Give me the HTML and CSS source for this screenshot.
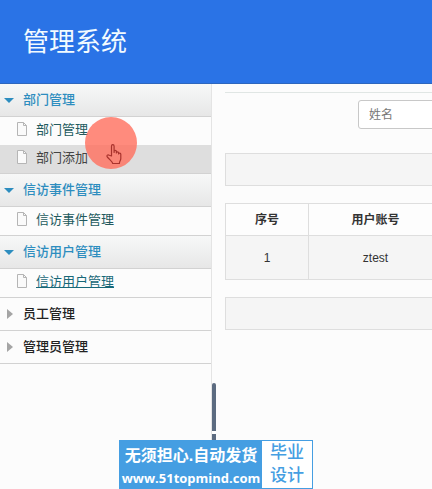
FILE: index.html
```html
<!DOCTYPE html>
<html lang="zh-CN">
<head>
    <meta charset="UTF-8">
    <title>管理系统</title>
    <link rel="stylesheet" href="styles.css">
</head>
<body>
<svg class="symbols" width="0" height="0">
    <symbol id="page" viewBox="0 0 12 14">
        <path d="M1.5 .5h6l3 3v10h-9z" fill="#fafafa" stroke="#b5b5b5"/>
        <path d="M7.5 .5v3h3" fill="none" stroke="#b5b5b5"/>
    </symbol>
</svg>
<header class="header">
    <h1>管理系统</h1>
</header>
<div class="container">
    <nav class="menu">
        <div class="menu_group open">
            <button type="button" class="menu_title">部门管理</button>
            <ul>
                <li><a href="#"><svg class="icon"><use href="#page"/></svg><span>部门管理</span></a></li>
                <li class="current"><a href="#"><svg class="icon"><use href="#page"/></svg><span>部门添加</span></a></li>
            </ul>
        </div>
        <div class="menu_group open">
            <button type="button" class="menu_title">信访事件管理</button>
            <ul>
                <li><a href="#"><svg class="icon"><use href="#page"/></svg><span>信访事件管理</span></a></li>
            </ul>
        </div>
        <div class="menu_group open">
            <button type="button" class="menu_title">信访用户管理</button>
            <ul>
                <li><a href="#" class="underline"><svg class="icon"><use href="#page"/></svg><span>信访用户管理</span></a></li>
            </ul>
        </div>
        <div class="menu_group">
            <button type="button" class="menu_title">员工管理</button>
        </div>
        <div class="menu_group">
            <button type="button" class="menu_title">管理员管理</button>
        </div>
    </nav>
    <div class="splitter"><span class="splitter_bar"></span></div>
    <main class="main">
        <div class="content">
            <form class="search">
                <input type="text" placeholder="姓名" aria-label="姓名">
            </form>
            <div class="toolbar"></div>
            <table class="list">
                <thead>
                <tr><th class="col_no">序号</th><th>用户账号</th></tr>
                </thead>
                <tbody>
                <tr><td>1</td><td>ztest</td></tr>
                </tbody>
            </table>
            <div class="toolbar"></div>
        </div>
    </main>
</div>
<div class="pointer">
    <svg viewBox="0 0 18 22" width="18" height="22">
        <path d="M6.5 13V3.2c0-2 2.6-2 2.6 0v6.3-1c0-1.500 2.300-1.500 2.300 0v1.400c0-1.500 2.200-1.300 2.200 0v1c0-1.300 2.200-1.100 2.200.3v4.300c0 2-1.400 2.600-1.400 5H7.700c0-1.800-2.600-3.300-5.400-6.500-1.200-1.600.6-2.800 2-1.700z" fill="none" stroke="#a8322c" stroke-width="1.2" stroke-linejoin="round"/>
    </svg>
</div>
<div class="banner">
    <div class="banner_text">
        <strong>无须担心.自动发货</strong>
        <a href="#">www.51topmind.com</a>
    </div>
    <div class="banner_tag">毕业<br>设计</div>
</div>
</body>
</html>
```

FILE: styles.css
```css
* {
    box-sizing: border-box;
    margin: 0;
    padding: 0;
}
body {
    display: flex;
    flex-direction: column;
    min-height: 100vh;
    background: #fcfcfc;
    color: #333;
    font: 13px/20px "Liberation Sans", "Noto Sans CJK SC", sans-serif;
    overflow: hidden;
}
ul {
    list-style: none;
}
.symbols {
    position: absolute;
}
.header {
    padding: 23px 23px 21px;
    background: #2a73e6;
    border-bottom: 1px solid #2d66bd;
}
.header h1 {
    color: #f2fbff;
    font-size: 26px;
    font-weight: normal;
    line-height: 39px;
}
.container {
    display: flex;
    flex: 1;
}

/* menu */
.menu {
    flex: 0 0 212px;
    border-right: 1px solid #e4e4e4;
}
.menu_title {
    display: flex;
    align-items: center;
    width: 100%;
    height: 33px;
    padding-left: 4px;
    border: 0;
    border-bottom: 1px solid #d2d2d2;
    background: #fcfcfc;
    color: #222;
    font: inherit;
    font-weight: 500;
}
.menu_title::before {
    content: "";
    width: 19px;
    height: 12px;
    background: #a5a5a5;
    clip-path: polygon(3px 1px, 9px 6px, 3px 11px);
}
.open {
    border-bottom: 1px solid #d2d2d2;
}
.open .menu_title {
    background: linear-gradient(#f7f8f8, #e7e7e7);
    color: #2d8dbf;
}
.open .menu_title::before {
    background: #2d8dbf;
    clip-path: polygon(0 4px, 10px 4px, 5px 9px);
}
.menu_group a {
    display: flex;
    align-items: center;
    height: 28px;
    padding: 0 0 3px 16px;
    color: #235a5e;
    text-decoration: none;
}
.menu_group .current {
    background: #dedede;
}
.menu_group .current a {
    color: #444;
}
.menu_group a.underline {
    color: #176878;
    text-decoration: underline;
}
.icon {
    width: 12px;
    height: 14px;
    margin: 0 8px 2px 0;
}

/* splitter */
.splitter {
    display: flex;
    align-items: flex-end;
    flex: 0 0 5px;
}
.splitter_bar {
    width: 4px;
    height: 106px;
    border-radius: 2px 2px 0 0;
    background: linear-gradient(#5c6b80 48px, #fff 48px, #fff 51px, #5c6b80 51px);
}

/* list */
.main {
    flex: 1;
    min-width: 0;
    padding: 8px 0 0 8px;
    overflow: hidden;
}
.content {
    min-width: 218px;
    border-top: 1px solid #e0e6e4;
}
.search {
    padding: 7px 0 24px 133px;
}
.search input {
    display: block;
    width: 160px;
    height: 29px;
    padding: 0 10px;
    border: 1px solid #c8c8c8;
    border-radius: 3px;
    background: #fff;
    font: inherit;
    font-size: 12px;
}
.search input::placeholder {
    color: #777;
}
.toolbar {
    height: 33px;
    border: 1px solid #dedede;
    background: #f5f5f5;
}
.list {
    width: 100%;
    margin: 17px 0;
    border-collapse: collapse;
    text-align: center;
    font-size: 12px;
}
.list th, .list td {
    border: 1px solid #dedede;
}
.list th {
    height: 32px;
    background: #fdfdfd;
}
.list td {
    height: 44px;
    background: #f5f5f5;
}
.col_no {
    width: 83px;
}

/* cursor highlight */
.pointer {
    position: absolute;
    left: 85px;
    top: 117px;
    width: 52px;
    height: 52px;
    padding: 26px 0 0 20px;
    border-radius: 50%;
    background: rgba(255, 110, 92, .8);
}
.pointer svg {
    display: block;
}

/* banner */
.banner {
    position: fixed;
    left: 50%;
    bottom: 0;
    display: flex;
    width: 194px;
    margin-left: -97px;
    padding: 1px;
    background: #459ee2;
    color: #fff;
}
.banner_text {
    flex: 1;
    padding-top: 3px;
    text-align: center;
    white-space: nowrap;
}
.banner_text strong {
    display: block;
    font-size: 16px;
    line-height: 24px;
}
.banner_text a {
    display: block;
    color: #fff;
    font: bold 13px/20px "Open Sans", sans-serif;
    text-decoration: none;
}
.banner_tag {
    flex: 0 0 50px;
    background: #fff;
    color: #459ee2;
    font-size: 17px;
    font-weight: 500;
    line-height: 23px;
    text-align: center;
}
```
